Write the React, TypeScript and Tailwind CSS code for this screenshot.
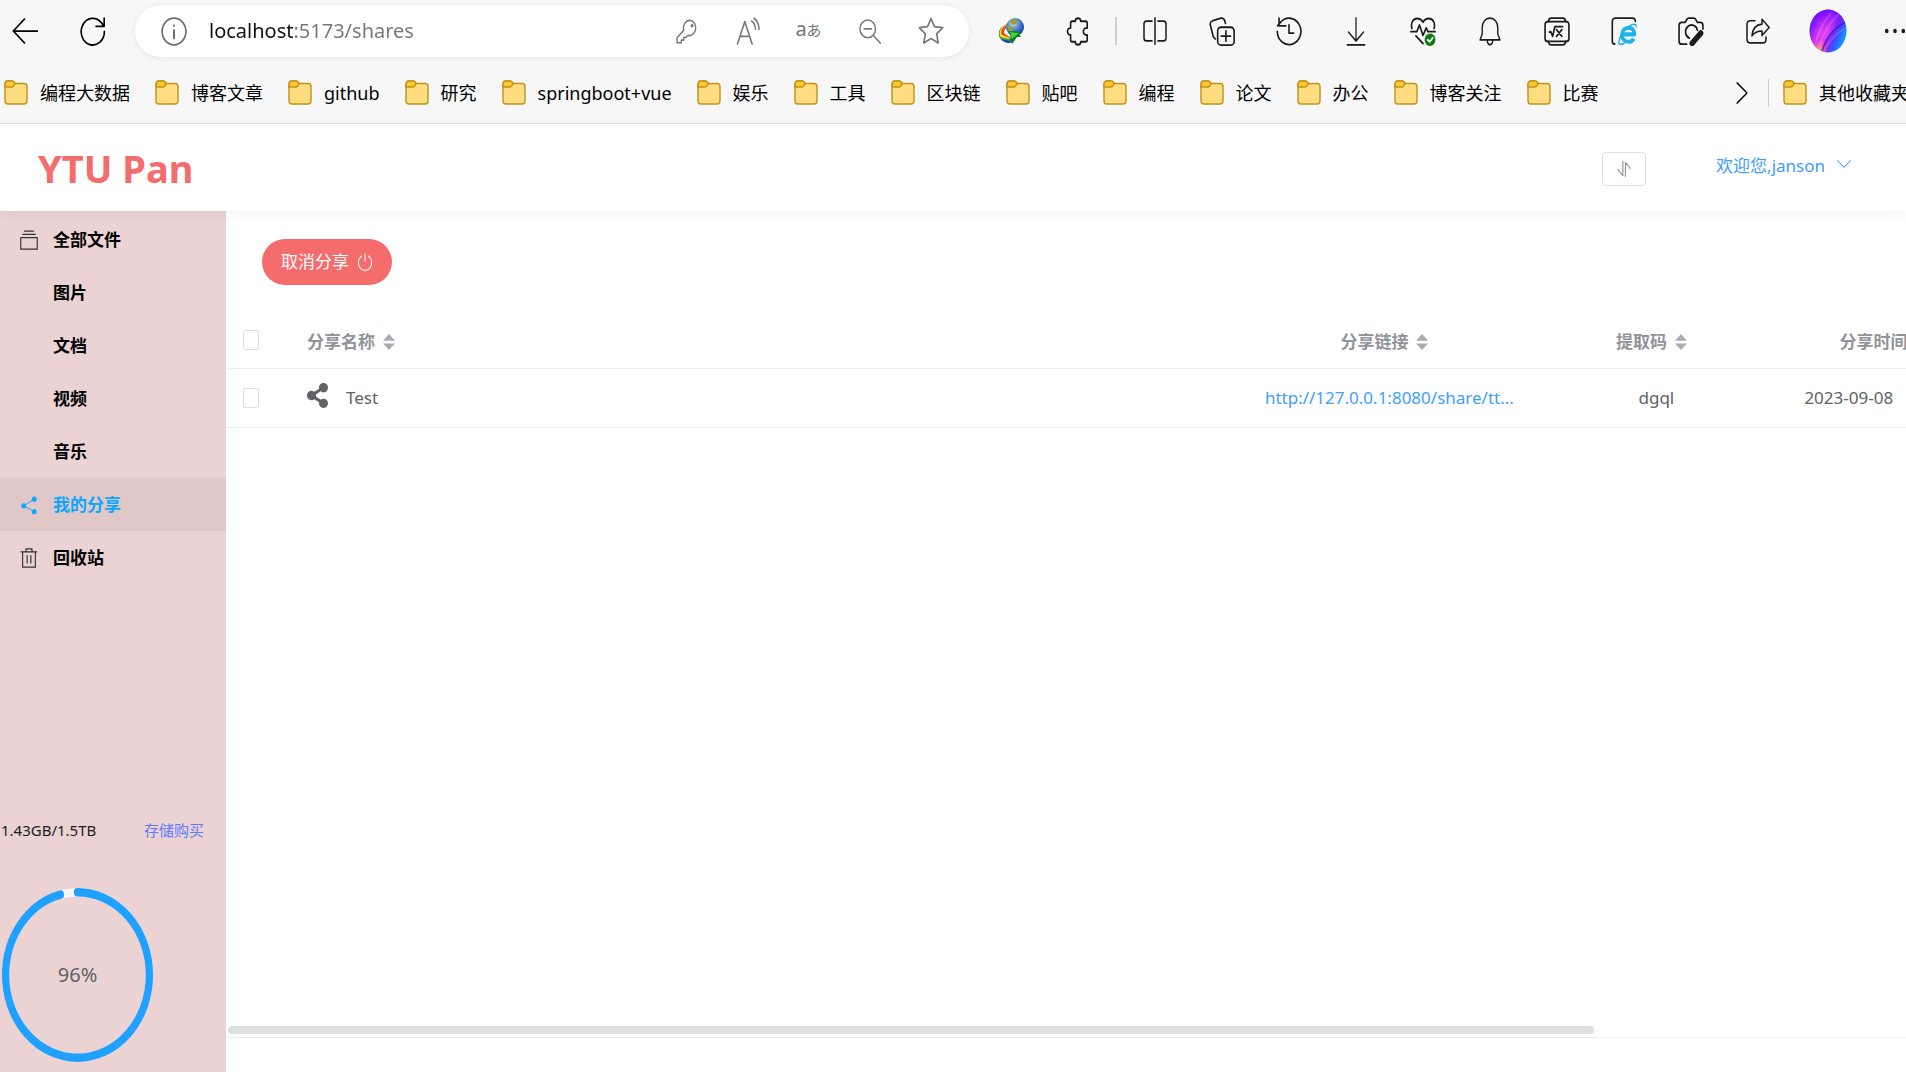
import type { ReactNode } from 'react'
import { FaShareAlt } from 'react-icons/fa'
import clsx from 'clsx'

const bookmarks = [
  '编程大数据',
  '博客文章',
  'github',
  '研究',
  'springboot+vue',
  '娱乐',
  '工具',
  '区块链',
  '贴吧',
  '编程',
  '论文',
  '办公',
  '博客关注',
  '比赛',
]

const shares = [
  { name: 'Test', link: 'http://127.0.0.1:8080/share/tt...', code: 'dgql', date: '2023-09-08' },
]

// Line icon on a 24 grid, stretched to the size given in className
function Icon({ children, className = 'w-6 h-7', stroke = 1.5 }: { children: ReactNode; className?: string; stroke?: number }) {
  return (
    <svg
      viewBox="0 0 24 24"
      preserveAspectRatio="none"
      fill="none"
      stroke="currentColor"
      strokeWidth={stroke}
      strokeLinecap="round"
      strokeLinejoin="round"
      className={clsx('shrink-0', className)}
      aria-hidden="true"
    >
      {children}
    </svg>
  )
}

function FolderIcon() {
  return (
    <svg viewBox="0 0 24 25" fill="none" stroke="#c0921a" strokeWidth="1.4" className="w-6 h-[25px] shrink-0" aria-hidden="true">
      <path d="M1 4.2C1 2.2 2 1 4 1h4.2c1 0 1.6.4 2.1 1.2l.9 1.300H20c2 0 3 1.200 3 3V21c0 2-1 3-3 3H4c-2 0-3-1-3-3z" fill="#ffdd80" />
      <path d="M1 7V4.200C1 2.200 2 1 4 1h4.200c1 0 1.600.4 2.100 1.200l.9 1.300-1.500 2.300C9.200 6.600 8.500 7 7.500 7z" fill="#fac831" />
    </svg>
  )
}

function ToolButton({ label, children }: { label: string; children: ReactNode }) {
  return (
    <button type="button" aria-label={label} className="w-[67px] h-12 shrink-0 flex items-center justify-center">
      {children}
    </button>
  )
}

function PillButton({ label, children }: { label: string; children: ReactNode }) {
  return (
    <button type="button" aria-label={label} className="w-[61px] h-12 shrink-0 flex items-center justify-center text-[#767676]">
      {children}
    </button>
  )
}

function IdmIcon() {
  return (
    <svg viewBox="0 0 26 28" className="w-[26px] h-7" aria-hidden="true">
      <defs>
        <radialGradient id="globe" cx="0.4" cy="0.3" r="0.75">
          <stop offset="0" stopColor="#f4f6d8" />
          <stop offset="0.35" stopColor="#6a96c8" />
          <stop offset="0.7" stopColor="#2a62c8" />
          <stop offset="1" stopColor="#0a2a6c" />
        </radialGradient>
      </defs>
      <path d="M8 8C2 10-1 16 2 21s9 6 13 4l-4-6z" fill="#1844c8" />
      <path d="M9 7C1 10-1 17 3 22l10 2-4-6z" fill="#3cae2c" />
      <path d="M9 7C2 10 0 16 3 20l9 2-3-6z" fill="#ffe01c" />
      <path d="M9 8C4 10 2 15 4 18l8 3-3-6z" fill="#e8451e" />
      <path d="M10 10c-4 2-5 5-3 7l5 3z" fill="#fff" />
      <circle cx="17" cy="10" r="9" fill="url(#globe)" />
      <path d="M12 4c2-2 6-2 8-1l-2 4-4 1zM9 8l5 3 1 4-4 1z" fill="#9c9c3c" />
      <path d="M10 14l15 1-4 2 2 3-4 0-5 7-2-9z" fill="#0c7a1c" />
      <path d="M12 15l9 1-7 6z" fill="#3ed23e" />
    </svg>
  )
}

function Avatar() {
  return (
    <svg viewBox="0 0 38 44" className="w-[38px] h-11" aria-hidden="true">
      <defs>
        <linearGradient id="avatar" x1="0" y1="0.3" x2="1" y2="0.75">
          <stop offset="0" stopColor="#3a16f0" />
          <stop offset="0.12" stopColor="#8a22f4" />
          <stop offset="0.3" stopColor="#d836f4" />
          <stop offset="0.5" stopColor="#e040f0" />
          <stop offset="0.64" stopColor="#7a2af4" />
          <stop offset="0.76" stopColor="#2a60ff" />
          <stop offset="1" stopColor="#10b4ff" />
        </linearGradient>
        <linearGradient id="avatarTop" x1="0" y1="0" x2="0" y2="1">
          <stop offset="0" stopColor="#6a08ff" />
          <stop offset="0.5" stopColor="#8a10ff" stopOpacity="0" />
        </linearGradient>
        <radialGradient id="avatarGlow" cx="0.28" cy="0.92" r="0.22">
          <stop offset="0" stopColor="#ffb050" />
          <stop offset="1" stopColor="#ff6aa0" stopOpacity="0" />
        </radialGradient>
        <clipPath id="avatarClip">
          <ellipse cx="19" cy="22" rx="18.500" ry="21.500" />
        </clipPath>
      </defs>
      <g clipPath="url(#avatarClip)">
        <rect width="38" height="44" fill="url(#avatar)" />
        <rect width="38" height="44" fill="url(#avatarTop)" />
        <rect width="38" height="44" fill="url(#avatarGlow)" />
        <path d="M11 36C14 24 20 14 30 5M7 32C10 22 15 12 22 4M18 38C22 30 29 23 37 19" stroke="#fff" strokeOpacity="0.2" strokeWidth="1.200" fill="none" />
        <path d="M13 42C17 29 25 19 37 13" stroke="#3010d8" strokeOpacity="0.7" strokeWidth="1.800" fill="none" />
      </g>
    </svg>
  )
}

function BrowserBar() {
  return (
    <div className="flex items-center h-[62px]">
      <button type="button" aria-label="Back" className="w-[50px] h-12 flex items-center justify-center">
        <Icon className="w-[26px] h-7">
          <path d="M23.500 12H1.500M11.500 1.800L1.200 12l10.300 10.200" />
        </Icon>
      </button>
      <button type="button" aria-label="Refresh" className="w-[85px] h-12 flex items-center justify-center">
        <Icon className="w-[26px] h-[29px]">
          <path d="M22.500 12A10.700 11 0 1 1 19.500 4.500L22 7.500M22.300 1v6.700h-7.500" />
        </Icon>
      </button>

      <div className="flex-1 min-w-0 h-[52px] flex items-center rounded-full bg-white shadow-[0_1px_6px_rgba(0,0,0,0.08)] pl-[26px] pr-2">
        <Icon className="w-[26px] h-[29px] text-[#6b6b6b]">
          <circle cx="12" cy="12" r="11" />
          <path d="M12 11v6.500M12 7.200v.1" strokeWidth="1.800" />
        </Icon>
        <input
          type="text"
          aria-label="Address"
          defaultValue="localhost:5173/shares"
          className="ml-[22px] flex-1 min-w-0 text-xl outline-none text-transparent bg-clip-text bg-[linear-gradient(90deg,#111_85px,#767676_85px)]"
        />
        <PillButton label="Passwords">
          <Icon className="w-[22px] h-[25px]">
            <path d="M15.500 1.200a7.300 7.300 0 0 0-7 9.500L1.200 18v4.800h4.600v-2.500h2.600v-2.600h2.400l1.800-1.900a7.300 7.300 0 1 0 2.900-14.600z" />
            <circle cx="17.500" cy="6.500" r="0.900" fill="currentColor" />
          </Icon>
        </PillButton>
        <PillButton label="Read aloud">
          <Icon>
            <path d="M1.500 23L8.800 4l7.300 19M4 16.500h9.600M15.500 3.500c2.500 1.500 3.800 4 4 7M18 1c3.200 2 5 5.500 5 9.500" />
          </Icon>
        </PillButton>
        <PillButton label="Translate">
          <span className="flex items-baseline pb-1 leading-6">
            <span className="text-xl">a</span>
            <span className="text-[15px]">あ</span>
          </span>
        </PillButton>
        <PillButton label="Zoom out">
          <Icon className="w-[22px] h-[25px]">
            <circle cx="9.500" cy="9.500" r="8.500" />
            <path d="M15.800 15.800l7.400 7.400M5.500 9.500h8" />
          </Icon>
        </PillButton>
        <PillButton label="Add to favorites">
          <Icon className="w-[26px] h-7">
            <path d="M12 1.300l3.200 7 7.600.9-5.600 5.300 1.500 7.700L12 18.500l-6.700 3.700 1.500-7.700L1.200 9.200l7.600-.9z" />
          </Icon>
        </PillButton>
      </div>

      <div className="flex items-center shrink-0 pl-2 text-[#1b1b1b]">
        <ToolButton label="Download manager">
          <IdmIcon />
        </ToolButton>
        <ToolButton label="Extensions">
          <Icon className="w-6 h-[29px]" stroke={1.6}>
            <path d="M9.300 3.500a2.700 2.400 0 0 1 5.400 0h4.800c1 0 1.700.6 1.700 1.500v4.200h-1.200a2.700 2.800 0 0 0 0 5.600h1.200V19c0 .9-.7 1.500-1.700 1.500h-4.800a2.700 2.400 0 0 1-5.400 0H6.200c-.9 0-1.600-.6-1.600-1.500v-4.200h-.4a2.700 2.800 0 0 1 0-5.600h.4V5c0-.9.7-1.500 1.600-1.500z" />
          </Icon>
        </ToolButton>
        <span className="w-0.5 h-7 mx-1 bg-[#cfcfcf]" />
        <ToolButton label="Split screen">
          <Icon>
            <path d="M12 .8v22.400M9 3.500H3.500c-1.500 0-2.500.8-2.500 2.300v12.400c0 1.500 1 2.300 2.500 2.300H9M15 3.500h5.500c1.500 0 2.500.8 2.500 2.300v12.400c0 1.500-1 2.300-2.500 2.300H15" />
          </Icon>
        </ToolButton>
        <ToolButton label="Collections">
          <Icon className="w-[26px] h-[29px]">
            <rect x="8" y="8.500" width="15.200" height="14.700" rx="3" />
            <path d="M15.600 11.500v8.500M11.300 15.800h8.600M5.800 18.200C4.500 17.600 4 16.800 3.700 15.500L1.200 6.500c-.4-1.600.3-2.700 1.800-3.200L11 1c1.600-.4 2.800.2 3.400 1.800l.8 2.500" />
          </Icon>
        </ToolButton>
        <ToolButton label="History">
          <Icon className="w-[26px] h-[29px]">
            <path d="M1.200 12A10.900 10.900 0 1 0 4 4.600L1.500 7.200M2.800 1v6.300h6.300M12 6.500v6.800h4.300" />
          </Icon>
        </ToolButton>
        <ToolButton label="Downloads">
          <Icon className="w-5 h-[29px]">
            <path d="M12 .8v19M3 12.500l9 7.300 9-7.300M1.500 23h21" />
          </Icon>
        </ToolButton>
        <ToolButton label="Performance">
          <Icon className="w-[26px] h-[30px]">
            <path d="M1.800 10C.5 6 2.500 2 6.500 2c2.500 0 4.300 1.200 5.500 3 1.200-1.800 3-3 5.500-3 4 0 6 4 4.700 8M.8 12.500h5.500l2.500-5.300 3.200 8.300 3-6 1.500 3h6.700M5.500 16l6.500 6" />
            <circle cx="18.500" cy="19" r="5" fill="#107c10" stroke="none" />
            <path d="M16.300 19l1.700 1.700 3-3.200" stroke="#fff" />
          </Icon>
        </ToolButton>
        <ToolButton label="Notifications">
          <Icon className="w-[22px] h-[29px]">
            <path d="M12 1C7 1 3.500 4.300 3.500 9v5l-2.300 5h21.600l-2.300-5V9c0-4.700-3.500-8-8.500-8zM9 19.500c.3 2 1.500 3.300 3 3.300s2.700-1.300 3-3.300" />
          </Icon>
        </ToolButton>
        <ToolButton label="Math solver">
          <Icon className="w-[26px] h-[29px]">
            <rect x="1" y="3.800" width="22" height="16.400" rx="2.500" />
            <path d="M4 3.800C4.300 1.800 5 1 6.500 1h11c1.500 0 2.200.8 2.500 2.800M4 20.200c.3 2 1 2.800 2.500 2.800h11c1.500 0 2.200-.8 2.500-2.800M5 12.500l1.200-.5 1.800 4 2-8h7M11.500 10.500l5 5.500M16.500 10.500l-5 5.500" />
          </Icon>
        </ToolButton>
        <ToolButton label="Internet Explorer mode">
          <Icon className="w-[26px] h-[29px]">
            <path d="M3.500 22.500C2 22.300 1.200 21.500 1.200 20V4c0-2 1-3 3-3H20c1.500 0 2.300.8 2.500 2.500" />
            <path d="M10 14.400h11.600c0-3.500-2.200-5.500-5.600-5.500s-5.800 2.500-5.800 5.900 2.500 5.700 6 5.700c2.200 0 3.900-.7 4.800-2.500" stroke="#1eb4eb" strokeWidth="3.400" strokeLinecap="butt" />
            <path d="M23.200 8c0-2.500-2-2.200-4-1.500-5.200 1.900-11 8-12.200 15 1.200 1.700 3.500 1.200 5.500 0" stroke="#1eb4eb" strokeWidth="1.300" />
          </Icon>
        </ToolButton>
        <ToolButton label="Screenshot">
          <Icon className="w-[26px] h-[29px]">
            <path d="M8 22.500H3.500C2 22.500 1 21.500 1 20V7c0-1.500 1-2.500 2.500-2.500h3L8 2.200C8.500 1.400 9 1 10 1h4.500c1 0 1.500.4 2 1.200L18 4.500h2.500C22 4.500 23 5.500 23 7v3M10.500 17.500A5.600 5.600 0 1 1 18 11" />
            <path d="M21 13.400l-8 8.300" strokeWidth="4.800" />
          </Icon>
        </ToolButton>
        <ToolButton label="Share">
          <Icon className="w-6 h-[26px]">
            <path d="M9 2.500H4.500C2.500 2.500 1 3.800 1 5.800v13.700C1 21.500 2.500 23 4.500 23h12c2 0 3.500-1.500 3.500-3.500V17.500M16 1.200l7.200 7.600-7.200 7.400V12c-4.500 0-7.500 1.200-10 4.500.5-6 3.700-10.300 10-10.800z" />
          </Icon>
        </ToolButton>
        <button type="button" aria-label="Profile" className="w-[74px] h-12 flex items-center justify-center">
          <Avatar />
        </button>
        <button type="button" aria-label="Settings and more" className="w-[41px] h-12 flex items-center justify-end">
          <Icon className="w-[22px] h-7">
            <g fill="currentColor" stroke="none">
              <circle cx="3" cy="12" r="2" />
              <circle cx="12" cy="12" r="2" />
              <circle cx="21" cy="12" r="2" />
            </g>
          </Icon>
        </button>
      </div>
    </div>
  )
}

function BookmarkBar() {
  return (
    <div className="flex items-center h-[62px] pl-1 border-b border-[#e3e3e3] text-lg text-black">
      <nav aria-label="Favorites" className="flex-1 min-w-0 overflow-hidden flex items-center gap-[25px]">
        {bookmarks.map((name) => (
          <a key={name} href="#" className="flex items-center gap-3 whitespace-nowrap">
            <FolderIcon />
            {name}
          </a>
        ))}
      </nav>
      <button type="button" aria-label="More favorites" className="w-[52px] h-10 flex items-center justify-center">
        <Icon className="w-3 h-[22px]" stroke={2}>
          <path d="M2 1l20 11L2 23" />
        </Icon>
      </button>
      <span className="w-px h-7 mr-3.5 bg-[#cfcfcf]" />
      <a href="#" className="w-[123px] flex items-center gap-3 whitespace-nowrap overflow-hidden">
        <FolderIcon />
        其他收藏夹
      </a>
    </div>
  )
}

function Header() {
  return (
    <header className="relative z-10 flex items-center h-[87px] pl-[38px] pr-[55px] bg-white shadow-[0_2px_12px_rgba(0,0,0,0.06)]">
      <h1 className="flex-1 text-[38px] leading-[48px] font-bold text-[#f56c6c]">YTU Pan</h1>
      <button
        type="button"
        aria-label="Transfers"
        className="w-11 h-[34px] mr-[70px] mt-0.5 flex items-center justify-center rounded border border-[#dcdfe6] text-[#909399]"
      >
        <Icon className="w-[14px] h-4" stroke={2}>
          <path d="M10 1v21L1.500 13M14.500 23V2l8 9" />
        </Icon>
      </button>
      <button type="button" className="flex items-center gap-3 pb-1 text-[17px] leading-6 text-[#409eff]">
        欢迎您,janson
        <Icon className="w-3.5 h-2 mb-1" stroke={2}>
          <path d="M1 2l11 20L23 2" />
        </Icon>
      </button>
    </header>
  )
}

const menu = [
  {
    name: '全部文件',
    icon: (
      <Icon className="w-[18px] h-5" stroke={1.5}>
        <path d="M1 9h22v14H1zM3.500 5.200h17M6 1.200h12" />
      </Icon>
    ),
  },
  { name: '图片' },
  { name: '文档' },
  { name: '视频' },
  { name: '音乐' },
  {
    name: '我的分享',
    active: true,
    icon: (
      <Icon className="w-[18px] h-5" stroke={1.2}>
        <path d="M5 13L19 5M5 13l14 7" />
        <g fill="currentColor" stroke="none">
          <circle cx="5" cy="13" r="3.200" />
          <circle cx="19" cy="5" r="3.200" />
          <circle cx="19" cy="20" r="3.200" />
        </g>
      </Icon>
    ),
  },
  {
    name: '回收站',
    icon: (
      <Icon className="w-[18px] h-5" stroke={1.5}>
        <path d="M1.500 4.500h21M8 4V1h8v3M3.500 4.500V23h17V4.500M9.500 9v9M14.500 9v9" />
      </Icon>
    ),
  },
]

function Sidebar() {
  const percent = 96
  const length = 2 * Math.PI * 47
  return (
    <aside className="w-[226px] shrink-0 flex flex-col pt-0.5 pb-[9px] bg-[#ebd3d3]">
      <nav aria-label="Files">
        {menu.map((item) => (
          <a
            key={item.name}
            href="#"
            className={clsx(
              'flex items-center h-[53px] pl-5 text-[17px] font-bold',
              item.active ? 'bg-[#e0c8c8] text-[#0fa5ff]' : 'text-black'
            )}
          >
            <span className={clsx('w-[33px]', !item.active && 'text-[#303133]')}>{item.icon}</span>
            {item.name}
          </a>
        ))}
      </nav>
      <div className="mt-auto flex items-center justify-between pl-px pr-[22px] text-[15px] leading-6 text-[#1c1c1c]">
        <span>1.43GB/1.5TB</span>
        <a href="#" className="text-[#5b7cff]">存储购买</a>
      </div>
      <div className="mt-[45px] ml-px w-[153px] h-[176px] grid place-items-center">
        <svg viewBox="0 0 100 100" preserveAspectRatio="none" className="col-start-1 row-start-1 w-full h-full" aria-hidden="true">
          <g fill="none" strokeWidth="4.800" transform="rotate(-90 50 50)">
            <circle cx="50" cy="50" r="47" stroke="#f5f7fa" />
            <circle
              cx="50"
              cy="50"
              r="47"
              stroke="#20a0ff"
              strokeLinecap="round"
              strokeDasharray={`${(length * percent) / 100} ${length}`}
            />
          </g>
        </svg>
        <span className="col-start-1 row-start-1 text-xl text-[#606266]">{percent}%</span>
      </div>
    </aside>
  )
}

function SortHead({ title }: { title: string }) {
  return (
    <button type="button" className="inline-flex items-center pt-1 font-bold whitespace-nowrap">
      {title}
      <svg viewBox="0 0 12 16" className="ml-2 mr-2.5 w-3 h-4 fill-[#a8abb2]" aria-hidden="true">
        <path d="M6 0l6 6.800H0zM6 16l6-6.500H0z" />
      </svg>
    </button>
  )
}

const checkbox = 'block appearance-none w-4 h-5 mx-auto rounded-xs border border-[#dcdfe6] bg-white checked:bg-[#409eff]'

function ShareTable() {
  return (
    <div className="flex-1 overflow-hidden">
      <table className="w-[123%] table-fixed text-[17px] leading-6 text-[#606266]">
        <colgroup>
          <col className="w-[65px]" />
          <col />
          <col className="w-[294px]" />
          <col className="w-60" />
          <col className="w-[516px]" />
        </colgroup>
        <thead>
          <tr className="h-[55px] border-b border-[#ebeef5] text-[#909399]">
            <th className="pr-4">
              <input type="checkbox" aria-label="Select all" className={checkbox} />
            </th>
            <th className="pl-4 text-left"><SortHead title="分享名称" /></th>
            <th><SortHead title="分享链接" /></th>
            <th><SortHead title="提取码" /></th>
            <th className="pl-[63px] text-left"><SortHead title="分享时间" /></th>
          </tr>
        </thead>
        <tbody>
          {shares.map((share) => (
            <tr key={share.name} className="h-[59px] border-b border-[#ebeef5]">
              <td className="pr-4">
                <input type="checkbox" aria-label={share.name} className={checkbox} />
              </td>
              <td className="pl-4">
                <span className="flex items-center gap-[18px]">
                  <FaShareAlt className="w-[21px] h-[25px] mb-1" preserveAspectRatio="none" aria-hidden="true" />
                  {share.name}
                </span>
              </td>
              <td className="text-center">
                <a href="#" className="text-[#409eff]">{share.link}</a>
              </td>
              <td className="text-center">{share.code}</td>
              <td className="pl-7">{share.date}</td>
            </tr>
          ))}
        </tbody>
      </table>
    </div>
  )
}

export default function App() {
  return (
    <div className="min-h-screen flex flex-col overflow-hidden bg-white [font-family:'Noto_Sans','Noto_Sans_CJK_SC',sans-serif]">
      <div className="bg-[#f7f7f7]">
        <BrowserBar />
        <BookmarkBar />
      </div>
      <Header />
      <div className="flex-1 flex">
        <Sidebar />
        <main className="flex-1 min-w-0 flex flex-col pt-7 pb-[34px]">
          <button
            type="button"
            className="self-start ml-9 mb-7 h-[46px] px-[19px] flex items-center gap-2 rounded-full bg-[#f56c6c] text-[17px] text-white"
          >
            取消分享
            <Icon className="w-4 h-[18px]">
              <path d="M7 4a10 10.300 0 1 0 10 0M12 1v10" />
            </Icon>
          </button>
          <ShareTable />
          <div className="mx-0.5 mb-[3px]">
            <div className="w-[81.5%] h-2 rounded-full bg-[#dddee0]" />
          </div>
          <div className="h-px bg-[#ebeef5]" />
        </main>
      </div>
    </div>
  )
}
